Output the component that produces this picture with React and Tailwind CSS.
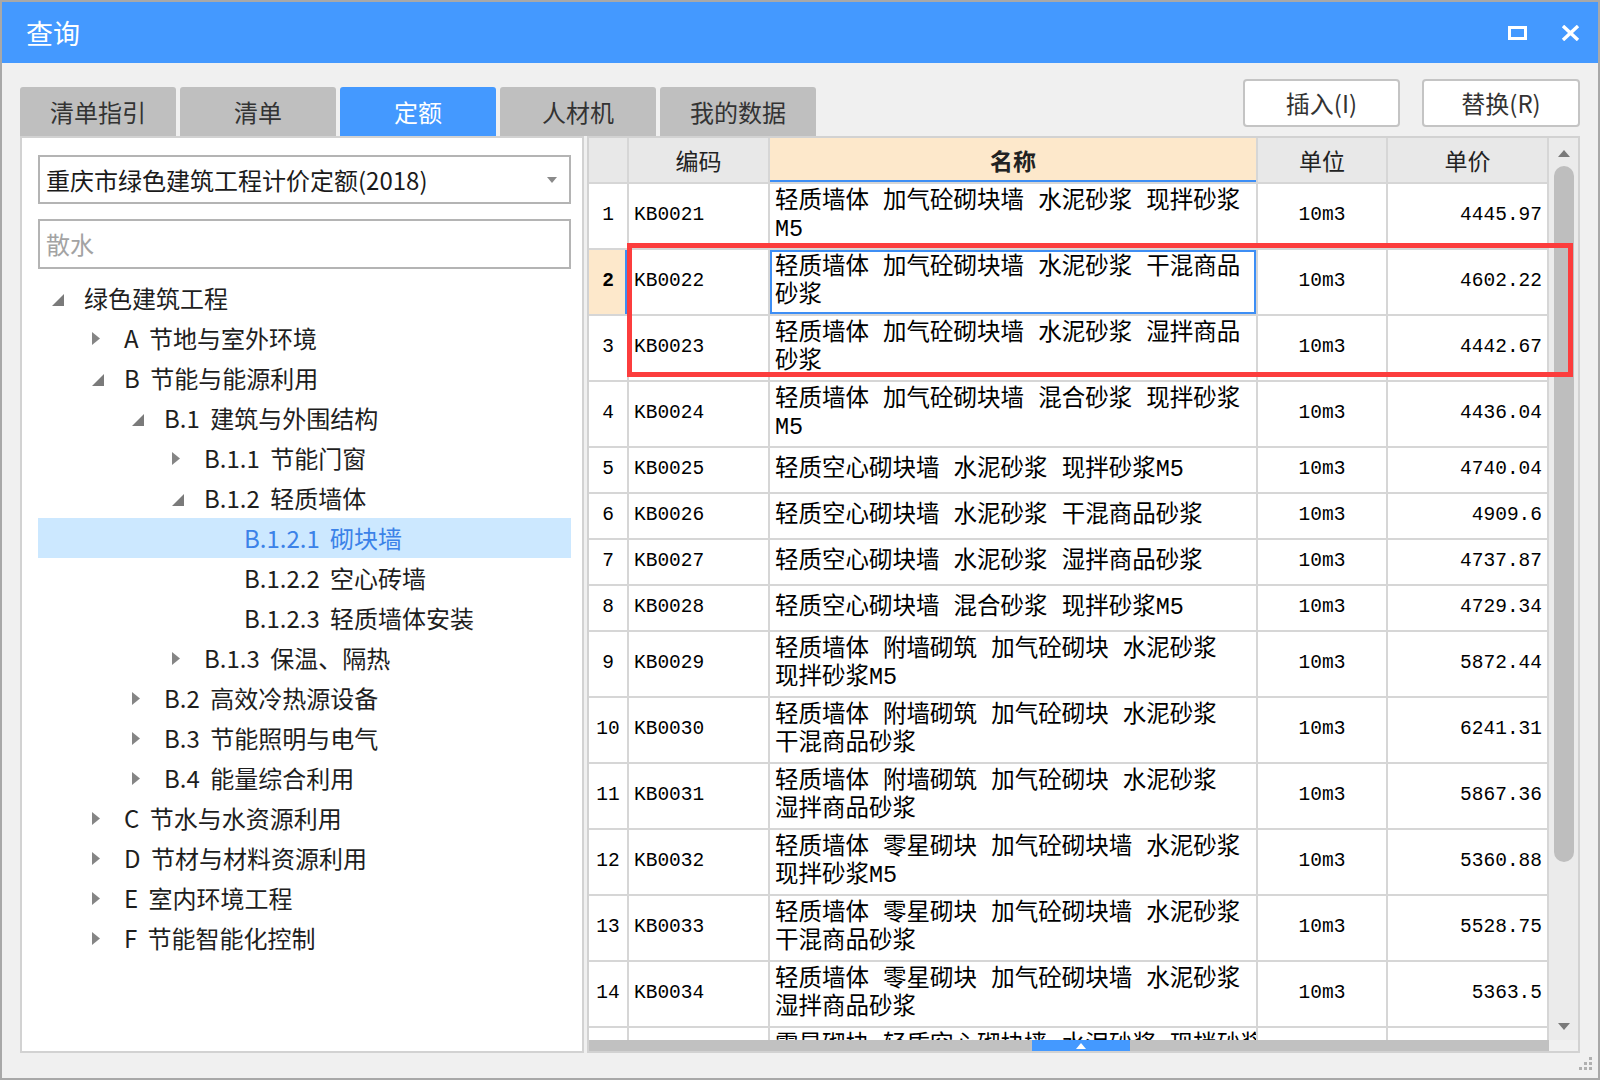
import React from 'react';

const tree = [
  { t: '绿色建筑工程', l: 0, s: 'open' },
  { t: 'A 节地与室外环境', l: 1, s: 'closed' },
  { t: 'B 节能与能源利用', l: 1, s: 'open' },
  { t: 'B.1 建筑与外围结构', l: 2, s: 'open' },
  { t: 'B.1.1 节能门窗', l: 3, s: 'closed' },
  { t: 'B.1.2 轻质墙体', l: 3, s: 'open' },
  { t: 'B.1.2.1 砌块墙', l: 4, s: 'leaf', sel: true },
  { t: 'B.1.2.2 空心砖墙', l: 4, s: 'leaf' },
  { t: 'B.1.2.3 轻质墙体安装', l: 4, s: 'leaf' },
  { t: 'B.1.3 保温、隔热', l: 3, s: 'closed' },
  { t: 'B.2 高效冷热源设备', l: 2, s: 'closed' },
  { t: 'B.3 节能照明与电气', l: 2, s: 'closed' },
  { t: 'B.4 能量综合利用', l: 2, s: 'closed' },
  { t: 'C 节水与水资源利用', l: 1, s: 'closed' },
  { t: 'D 节材与材料资源利用', l: 1, s: 'closed' },
  { t: 'E 室内环境工程', l: 1, s: 'closed' },
  { t: 'F 节能智能化控制', l: 1, s: 'closed' },
];

const indent = ['pl-[14px]', 'pl-[54px]', 'pl-[94px]', 'pl-[134px]', 'pl-[174px]'];

const rows = [
  { n: 1, code: 'KB0021', name: ['轻质墙体 加气砼砌块墙 水泥砂浆 现拌砂浆', 'M5'], price: '4445.97' },
  { n: 2, code: 'KB0022', name: ['轻质墙体 加气砼砌块墙 水泥砂浆 干混商品', '砂浆'], price: '4602.22', sel: true },
  { n: 3, code: 'KB0023', name: ['轻质墙体 加气砼砌块墙 水泥砂浆 湿拌商品', '砂浆'], price: '4442.67' },
  { n: 4, code: 'KB0024', name: ['轻质墙体 加气砼砌块墙 混合砂浆 现拌砂浆', 'M5'], price: '4436.04' },
  { n: 5, code: 'KB0025', name: ['轻质空心砌块墙 水泥砂浆 现拌砂浆M5'], price: '4740.04' },
  { n: 6, code: 'KB0026', name: ['轻质空心砌块墙 水泥砂浆 干混商品砂浆'], price: '4909.6' },
  { n: 7, code: 'KB0027', name: ['轻质空心砌块墙 水泥砂浆 湿拌商品砂浆'], price: '4737.87' },
  { n: 8, code: 'KB0028', name: ['轻质空心砌块墙 混合砂浆 现拌砂浆M5'], price: '4729.34' },
  { n: 9, code: 'KB0029', name: ['轻质墙体 附墙砌筑 加气砼砌块 水泥砂浆', '现拌砂浆M5'], price: '5872.44' },
  { n: 10, code: 'KB0030', name: ['轻质墙体 附墙砌筑 加气砼砌块 水泥砂浆', '干混商品砂浆'], price: '6241.31' },
  { n: 11, code: 'KB0031', name: ['轻质墙体 附墙砌筑 加气砼砌块 水泥砂浆', '湿拌商品砂浆'], price: '5867.36' },
  { n: 12, code: 'KB0032', name: ['轻质墙体 零星砌块 加气砼砌块墙 水泥砂浆', '现拌砂浆M5'], price: '5360.88' },
  { n: 13, code: 'KB0033', name: ['轻质墙体 零星砌块 加气砼砌块墙 水泥砂浆', '干混商品砂浆'], price: '5528.75' },
  { n: 14, code: 'KB0034', name: ['轻质墙体 零星砌块 加气砼砌块墙 水泥砂浆', '湿拌商品砂浆'], price: '5363.5' },
  { n: 15, code: 'KB0035', name: ['零星砌块 轻质空心砌块墙 水泥砂浆 现拌砂浆', 'M5'], price: '5642.18' },
];

const Arrow = ({ s }) => {
  if (s === 'open')
    return (
      <svg width="12" height="12" viewBox="0 0 12 12" className="mt-[4px]">
        <polygon points="12,0 12,12 0,12" fill="#7a7a7a" />
      </svg>
    );
  if (s === 'closed')
    return (
      <svg width="8" height="13" viewBox="0 0 8 13">
        <polygon points="0,0 8,6.5 0,13" fill="#858585" />
      </svg>
    );
  return null;
};

const cell = 'border-r-2 border-b-2 border-[#d6d6d6]';

export default function App() {
  return (
    <div className="w-[1600px] h-[1080px] border-2 border-[#a8a8a8] bg-[#f0f0f0] flex flex-col relative font-['Noto_Sans_CJK_SC',sans-serif] overflow-hidden">
      {/* title bar */}
      <div className="h-[61px] shrink-0 bg-[#4499ff] flex items-center pl-[24px] pr-[18px]">
        <span className="text-white text-[27px] leading-none">查询</span>
        <div className="flex-1" />
        <svg width="19" height="14" viewBox="0 0 19 14">
          <rect x="1.5" y="1.5" width="16" height="11" fill="none" stroke="white" strokeWidth="3" />
        </svg>
        <svg width="19" height="16" viewBox="0 0 19 16" className="ml-[34px]">
          <path d="M2 1 L17 15 M17 1 L2 15" stroke="white" strokeWidth="3.4" />
        </svg>
      </div>

      {/* tabs + buttons */}
      <div className="h-[73px] shrink-0 flex justify-between px-[18px]">
        <div className="flex gap-[4px] self-end">
          {['清单指引', '清单', '定额', '人材机', '我的数据'].map((t) => (
            <div
              key={t}
              className={`w-[156px] h-[49px] rounded-t-[3px] flex items-center justify-center text-[24px] ${
                t === '定额' ? 'bg-[#4499ff] text-white' : 'bg-[#bfbfbf] text-[#333]'
              }`}
            >
              {t}
            </div>
          ))}
        </div>
        <div className="flex gap-[22px] mt-[16px] h-[48px]">
          <button className="w-[157px] h-[48px] bg-white border-2 border-[#c4c4c4] rounded-[4px] text-[24px] text-[#333]">插入(I)</button>
          <button className="w-[158px] h-[48px] bg-white border-2 border-[#c4c4c4] rounded-[4px] text-[24px] text-[#333]">替换(R)</button>
        </div>
      </div>

      {/* panels */}
      <div className="h-[917px] shrink-0 flex gap-[3px] px-[18px]">
        {/* left panel */}
        <div className="w-[564px] bg-white border-2 border-[#d2d2d2] pl-[16px] pr-[11px] pt-[17px]">
          <div className="h-[49px] border-2 border-[#b4b4b4] flex items-center pl-[6px] pr-[12px]">
            <span className="text-[24px] text-[#1a1a1a] flex-1 whitespace-nowrap">重庆市绿色建筑工程计价定额(2018)</span>
            <svg width="10" height="6" viewBox="0 0 10 6">
              <polygon points="0,0 10,0 5,6" fill="#8a8a8a" />
            </svg>
          </div>
          <div className="h-[50px] mt-[15px] border-2 border-[#b4b4b4] flex items-center pl-[6px]">
            <span className="text-[24px] text-[#a3a3a3]">散水</span>
          </div>
          <div className="mt-[9px]">
            {tree.map((n) => (
              <div
                key={n.t}
                className={`h-[40px] flex items-center ${indent[n.l]} ${n.sel ? 'bg-[#cce8ff]' : ''}`}
              >
                <div className="w-[32px] flex items-center">
                  <Arrow s={n.s} />
                </div>
                <span
                  className={`text-[24px] whitespace-nowrap [word-spacing:5px] ${
                    n.sel ? 'text-[#3b82e8]' : 'text-[#1e1e1e]'
                  }`}
                >
                  {n.t}
                </span>
              </div>
            ))}
          </div>
        </div>

        {/* right panel */}
        <div className="flex-1 relative bg-white border-2 border-[#d2d2d2] flex flex-col">
          <div className="h-[902px] flex">
            <div className="w-[960px] overflow-hidden font-['Liberation_Mono','Noto_Sans_CJK_SC',monospace] text-black">
              <div className="grid grid-cols-[40px_141px_488px_130px_161px]">
                <div className={`${cell} h-[46px] bg-[#e8e8e8]`} />
                <div className={`${cell} h-[46px] bg-[#e8e8e8] flex items-center justify-center font-['Noto_Sans_CJK_SC',sans-serif] text-[23px] text-[#222]`}>编码</div>
                <div className={`${cell} h-[46px] bg-[#fde8cb] shadow-[inset_0_-2px_0_#3d8ef5] flex items-center justify-center font-['Noto_Sans_CJK_SC',sans-serif] text-[23px] font-bold text-[#222]`}>名称</div>
                <div className={`${cell} h-[46px] bg-[#e8e8e8] flex items-center justify-center font-['Noto_Sans_CJK_SC',sans-serif] text-[23px] text-[#222]`}>单位</div>
                <div className={`${cell} h-[46px] bg-[#e8e8e8] flex items-center justify-center font-['Noto_Sans_CJK_SC',sans-serif] text-[23px] text-[#222]`}>单价</div>
                {rows.map((r) => {
                  const h = r.name.length > 1 ? 'h-[66px]' : 'h-[46px]';
                  return (
                    <React.Fragment key={r.n}>
                      <div
                        className={`${cell} ${h} flex items-center justify-center text-[19.5px] ${
                          r.sel ? 'bg-[#fde8cb] font-bold shadow-[inset_-2px_0_0_#3d8ef5]' : ''
                        }`}
                      >
                        {r.n}
                      </div>
                      <div className={`${cell} ${h} flex items-center pl-[5px] text-[19.5px]`}>{r.code}</div>
                      <div
                        className={`${cell} ${h} flex flex-col justify-center pl-[5px] text-[23.5px] leading-[28px] whitespace-nowrap overflow-hidden ${
                          r.sel ? 'shadow-[inset_0_0_0_2px_#3d8ef5]' : ''
                        }`}
                      >
                        {r.name.map((ln) => (
                          <div key={ln}>{ln}</div>
                        ))}
                      </div>
                      <div className={`${cell} ${h} flex items-center justify-center text-[19.5px]`}>10m3</div>
                      <div className={`${cell} ${h} flex items-center justify-end pr-[5px] text-[19.5px]`}>{r.price}</div>
                    </React.Fragment>
                  );
                })}
              </div>
            </div>
            {/* vertical scrollbar */}
            <div className="w-[29px] bg-[#ebebeb] flex flex-col items-center">
              <svg width="12" height="7" viewBox="0 0 12 7" className="mt-[12px]">
                <polygon points="6,0 12,7 0,7" fill="#7a7a7a" />
              </svg>
              <div className="w-[20px] h-[696px] mt-[9px] rounded-full bg-[#bebebe]" />
              <div className="flex-1" />
              <svg width="12" height="7" viewBox="0 0 12 7" className="mb-[10px]">
                <polygon points="0,0 12,0 6,7" fill="#7a7a7a" />
              </svg>
            </div>
          </div>
          {/* horizontal scrollbar */}
          <div className="h-[11px] flex">
            <div className="w-[960px] bg-[#c1c1c1] pl-[443px]">
              <div className="w-[98px] h-[11px] bg-[#4499ff] flex items-center justify-center">
                <svg width="10" height="6" viewBox="0 0 10 6">
                  <polygon points="5,0 10,6 0,6" fill="white" />
                </svg>
              </div>
            </div>
            <div className="flex-1 bg-[#f0f0f0]" />
          </div>

          {/* red highlight box */}
          <div className="absolute left-[38px] top-[105px] w-[946px] h-[134px] border-[5px] border-[#fc3d3d] pointer-events-none" />
        </div>
      </div>

      {/* resize grip */}
      <div className="absolute right-[6px] bottom-[8px] grid grid-cols-3 gap-[2px]">
        <span className="w-[3px] h-[3px]" />
        <span className="w-[3px] h-[3px]" />
        <span className="w-[3px] h-[3px] bg-[#b0b0b0]" />
        <span className="w-[3px] h-[3px]" />
        <span className="w-[3px] h-[3px] bg-[#b0b0b0]" />
        <span className="w-[3px] h-[3px] bg-[#b0b0b0]" />
        <span className="w-[3px] h-[3px] bg-[#b0b0b0]" />
        <span className="w-[3px] h-[3px] bg-[#b0b0b0]" />
        <span className="w-[3px] h-[3px] bg-[#b0b0b0]" />
      </div>
    </div>
  );
}
